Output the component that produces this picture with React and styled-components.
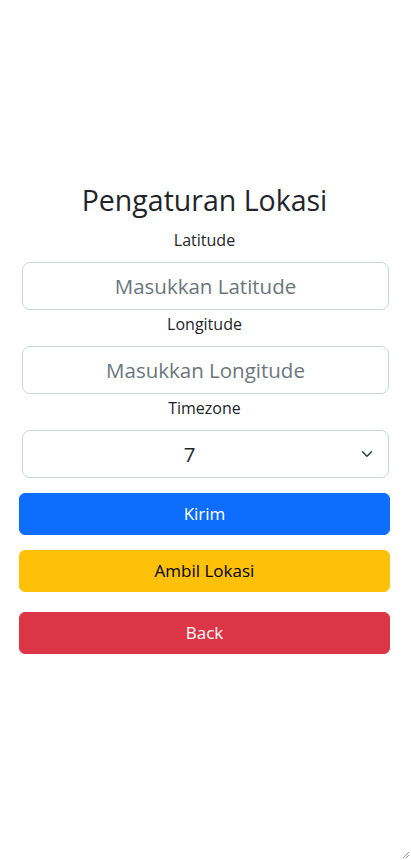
import React from "react";
import styled, { createGlobalStyle } from "styled-components";

const GlobalStyle = createGlobalStyle`
  * { box-sizing: border-box; }
  html, body { margin: 0; padding: 0; background: #fff; }
  body {
    font-family: "Open Sans", "Noto Sans", sans-serif;
    color: #212529;
    font-size: 16px;
    line-height: 1.5;
  }
`;

const App = () => {
  return (
    <>
      <GlobalStyle />
      <Page>
        <Title>Pengaturan Lokasi</Title>
        <Form onSubmit={(e) => e.preventDefault()}>
          <Label htmlFor="lat">Latitude</Label>
          <Input id="lat" type="text" placeholder="Masukkan Latitude" />
          <Label htmlFor="lon">Longitude</Label>
          <Input id="lon" type="text" placeholder="Masukkan Longitude" />
          <Label htmlFor="tz">Timezone</Label>
          <SelectWrap>
            <Select id="tz" defaultValue="7">
              <option value="7">7</option>
              <option value="8">8</option>
              <option value="9">9</option>
            </Select>
            <Chevron viewBox="0 0 16 16" aria-hidden="true">
              <path
                d="m2 5 6 6 6-6"
                fill="none"
                stroke="#343a40"
                strokeWidth="2"
                strokeLinecap="round"
                strokeLinejoin="round"
              />
            </Chevron>
          </SelectWrap>
          <Buttons>
            <Button type="submit" $variant="primary">Kirim</Button>
            <Button type="button" $variant="warning">Ambil Lokasi</Button>
            <Button type="button" $variant="danger" $gap={20}>Back</Button>
          </Buttons>
        </Form>
      </Page>
      <ResizeGrip viewBox="0 0 10 10" aria-hidden="true">
        <path d="M9 3 3 9 M9 6 6 9" stroke="#9a9a9a" strokeWidth="1" fill="none" />
      </ResizeGrip>
    </>
  );
};

export default App;

const variants = {
  primary: { bg: "#0d6efd", color: "#fff" },
  warning: { bg: "#ffc107", color: "#000" },
  danger: { bg: "#dc3545", color: "#fff" },
};

const Page = styled.div`
  min-height: 860px;
  padding: 184px 21px 0 19px;
  display: flex;
  flex-direction: column;
  align-items: center;
`;

const Title = styled.h1`
  margin: 0 0 8px;
  font-size: 28.5px;
  font-weight: 400;
  line-height: 33.6px;
  text-align: center;
`;

const Form = styled.form`
  width: 100%;
  display: flex;
  flex-direction: column;
  align-items: center;
`;

const Label = styled.label`
  display: block;
  margin: 2px 0 10px;
  font-size: 16px;
  line-height: 24px;
  text-align: center;
`;

const Input = styled.input`
  display: block;
  width: calc(100% - 4px);
  margin-left: 2px;
  height: 48px;
  padding: 8px 16px;
  font-family: inherit;
  font-size: 20.5px;
  line-height: 1.5;
  color: #212529;
  text-align: center;
  background: #fff;
  border: 1px solid #ced4da;
  border-radius: 8px;
  outline: none;

  &::placeholder {
    color: #6c757d;
  }
`;

const SelectWrap = styled.div`
  position: relative;
  width: calc(100% - 4px);
  margin-left: 2px;
`;

const Select = styled.select`
  display: block;
  width: 100%;
  height: 48px;
  padding: 8px 48px 8px 16px;
  font-family: inherit;
  font-size: 20.5px;
  line-height: 1.5;
  color: #212529;
  text-align: center;
  text-align-last: center;
  background: #fff;
  border: 1px solid #ced4da;
  border-radius: 8px;
  appearance: none;
  -webkit-appearance: none;
  outline: none;
`;

const Chevron = styled.svg`
  position: absolute;
  right: 14px;
  top: 50%;
  width: 16px;
  height: 12px;
  transform: translateY(-50%);
  pointer-events: none;
`;

const Buttons = styled.div`
  width: 100%;
  display: flex;
  flex-direction: column;
  margin-top: 15px;
`;

const Button = styled.button`
  display: block;
  width: 100%;
  height: 42px;
  margin-top: ${(p) => (p.$gap != null ? p.$gap : 15)}px;
  &:first-child { margin-top: 0; }
  padding: 0 12px;
  font-family: inherit;
  font-size: 17px;
  line-height: 1.5;
  color: ${(p) => variants[p.$variant].color};
  background: ${(p) => variants[p.$variant].bg};
  border: 1px solid ${(p) => variants[p.$variant].bg};
  border-radius: 6px;
  cursor: pointer;
`;

const ResizeGrip = styled.svg`
  position: fixed;
  right: 1px;
  bottom: 1px;
  width: 10px;
  height: 10px;
`;
